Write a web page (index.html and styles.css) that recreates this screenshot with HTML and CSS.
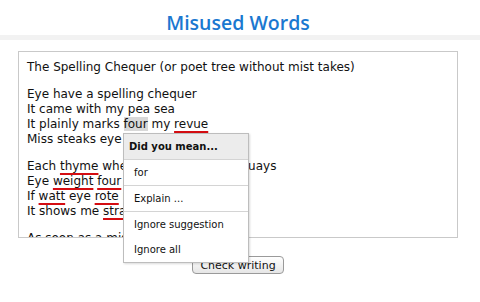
FILE: index.html
```html
<!DOCTYPE html>
<html lang="en">
<head>
  <meta charset="UTF-8" />
  <title>Misused Words</title>
  <link rel="stylesheet" href="styles.css">
</head>
<body>
  <header class="header">
    <h1>Misused Words</h1>
  </header>
  <div class="rule"></div>
  <main class="main">
    <div class="editor">
      <p>The Spelling Chequer (or poet tree without mist takes)</p>
      <p>
        Eye have a spelling chequer<br>
        It came with my pea sea<br>
        It plainly marks <span class="selected">four</span> my <span class="miss">revue</span><br>
        Miss steaks eye kin knot sea.
      </p>
      <p>
        Each <span class="miss">thyme</span> when eye strike at the quays<br>
        Eye <span class="miss">weight</span> <span class="miss">four</span> it two say<br>
        If <span class="miss">watt</span> eye <span class="miss">rote</span> is wrong oar write<br>
        It shows me <span class="miss">strait</span> a weigh.
      </p>
      <p>As soon as a mist ache is maid</p>
    </div>
    <div class="actions">
      <button class="btn">Check writing</button>
    </div>

    <div class="menu">
      <div class="menu-head">Did you mean...</div>
      <div class="menu-group">
        <div class="menu-item">for</div>
      </div>
      <div class="menu-group">
        <div class="menu-item">Explain ...</div>
      </div>
      <div class="menu-group">
        <div class="menu-item">Ignore suggestion</div>
        <div class="menu-item">Ignore all</div>
      </div>
    </div>
  </main>
</body>
</html>
```

FILE: styles.css
```css
body {
  margin: 0;
  font-family: 'DejaVu Sans', Verdana, sans-serif;
  color: #111;
  background: #fff;
}
.header {
  height: 35px;
  text-align: center;
}
h1 {
  margin: 0;
  padding-right: 4px;
  font-family: 'Open Sans', sans-serif;
  font-weight: 600;
  font-size: 19.5px;
  line-height: 45px;
  color: #1b78d0;
}
.rule {
  height: 5px;
  background: #f2f2f2;
}
.main {
  position: relative;
  padding-top: 11px;
}
.editor {
  box-sizing: border-box;
  margin-left: 18px;
  width: 440px;
  height: 187px;
  padding: 8px;
  border: 1px solid #c9c9c9;
  overflow: hidden;
  font-size: 12px;
  line-height: 15px;
}
.editor p {
  margin: 0 0 12px;
}
.miss {
  text-decoration: underline;
  text-decoration-color: #d40d12;
  text-decoration-thickness: 2px;
  text-underline-offset: 3px;
}
.selected {
  background: #d8d8d8;
}
.actions {
  display: flex;
  justify-content: center;
  padding-top: 18px;
  padding-right: 4px;
}
.btn {
  font-family: 'DejaVu Sans', Verdana, sans-serif;
  font-size: 11px;
  height: 18px;
  padding: 0 7px;
  border: 1px solid #9a9a9a;
  border-radius: 4px;
  background: linear-gradient(#ffffff, #e6e6e6);
  color: #111;
}
.menu {
  position: absolute;
  left: 123px;
  top: 93px;
  width: 124px;
  background: #fff;
  border: 1px solid #bdbdbd;
  box-shadow: 1px 1px 2px rgba(0, 0, 0, 0.15);
  font-size: 10px;
}
.menu-head {
  height: 25px;
  line-height: 25px;
  padding-left: 5px;
  font-weight: bold;
  background: #ececec;
  border-bottom: 1px solid #d4d4d4;
}
.menu-group + .menu-group {
  border-top: 1px solid #d4d4d4;
}
.menu-item {
  height: 25px;
  line-height: 25px;
  padding-left: 10px;
}
```
